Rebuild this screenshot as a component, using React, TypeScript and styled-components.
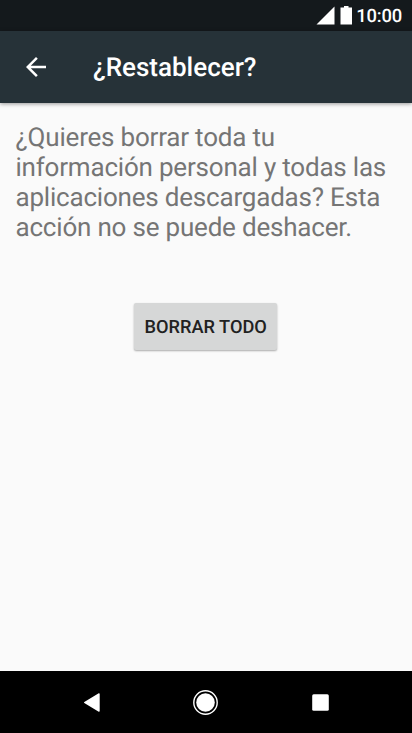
import React from 'react';
import styled, { createGlobalStyle } from 'styled-components';

const GlobalStyle = createGlobalStyle`
  *, *::before, *::after { box-sizing: border-box; }
  html, body { margin: 0; padding: 0; }
  body {
    background: #fafafa;
    font-family: Roboto, sans-serif;
    text-rendering: geometricPrecision;
    overflow: hidden;
  }
`;

const Screen = styled.div`
  display: flex;
  flex-direction: column;
  width: 412px;
  height: 733px;
  background: #fafafa;
`;

const StatusBar = styled.div`
  display: flex;
  align-items: center;
  justify-content: flex-end;
  flex: none;
  height: 31px;
  padding-right: 10px;
  background: #14191c;
  color: #fff;
`;

const Clock = styled.span`
  margin-left: 2px;
  padding-top: 2px;
  font-size: 18.4px;
  font-weight: 500;
  letter-spacing: -0.2px;
  line-height: 29px;
`;

const AppBar = styled.header`
  display: flex;
  align-items: center;
  flex: none;
  height: 72px;
  padding-left: 21px;
  gap: 42px;
  background: #263238;
  color: #fff;
  box-shadow: 0 1px 4px rgba(0, 0, 0, 0.4);
`;

const BackButton = styled.button`
  display: flex;
  padding: 0;
  border: 0;
  background: none;
  color: inherit;
`;

const Title = styled.h1`
  margin: 0;
  padding-top: 2px;
  font-size: 26px;
  font-weight: 500;
  line-height: 30px;
`;

const Content = styled.main`
  display: flex;
  flex-direction: column;
  align-items: center;
  flex: 1;
  padding: 20px 16px 0 15.5px;
`;

const Message = styled.p`
  align-self: stretch;
  margin: 0;
  color: #757575;
  font-size: 26px;
  letter-spacing: -0.2px;
  line-height: 30px;
  white-space: nowrap;
`;

const EraseButton = styled.button`
  width: 143px;
  height: 47px;
  margin-top: 60px;
  padding: 1px 0 0;
  border: 0;
  border-radius: 2px;
  background: #d6d7d7;
  color: #212121;
  font: 500 18.2px Roboto, sans-serif;
  text-rendering: inherit;
  box-shadow: 0 1px 2px rgba(0, 0, 0, 0.32);
`;

const NavBar = styled.nav`
  display: flex;
  align-items: center;
  justify-content: center;
  flex: none;
  gap: 84px;
  height: 62px;
  background: #000;
`;

export default function App() {
  return (
    <Screen>
      <GlobalStyle />
      <StatusBar>
        <svg width="38" height="20" viewBox="0 0 38 20" fill="#fff">
          <path d="M0.5 18.5 18.5 0.5v18zM24.5 1.5H28V0h4.5v1.5H36v17H24.5z" />
        </svg>
        <Clock>10:00</Clock>
      </StatusBar>
      <AppBar>
        <BackButton aria-label="Atrás">
          <svg width="30" height="30" viewBox="0 0 24 24" fill="currentColor">
            <path d="M20 11H7.83l5.59-5.59L12 4l-8 8 8 8 1.41-1.41L7.83 13H20z" />
          </svg>
        </BackButton>
        <Title>¿Restablecer?</Title>
      </AppBar>
      <Content>
        <Message>
          ¿Quieres borrar toda tu<br />
          información personal y todas las<br />
          aplicaciones descargadas? Esta<br />
          acción no se puede deshacer.
        </Message>
        <EraseButton>BORRAR TODO</EraseButton>
      </Content>
      <NavBar>
        <svg width="30" height="30" viewBox="0 0 30 30" fill="#fff">
          <path d="M7.3 14.9a.8.8 0 0 0 0 1.2l14 8.4c.8.5 1.4.2 1.4-.5V7c0-.7-.6-1-1.4-.5z" />
        </svg>
        <svg width="30" height="30" viewBox="0 0 30 30" fill="#fff">
          <circle cx="14.5" cy="15.5" r="9.3" />
          <circle cx="14.5" cy="15.5" r="11.7" fill="none" stroke="#fff" strokeWidth="1.4" />
        </svg>
        <svg width="30" height="30" viewBox="0 0 30 30" fill="#fff">
          <rect x="7.2" y="7.2" width="16.6" height="16.6" rx="1.5" />
        </svg>
      </NavBar>
    </Screen>
  );
}
